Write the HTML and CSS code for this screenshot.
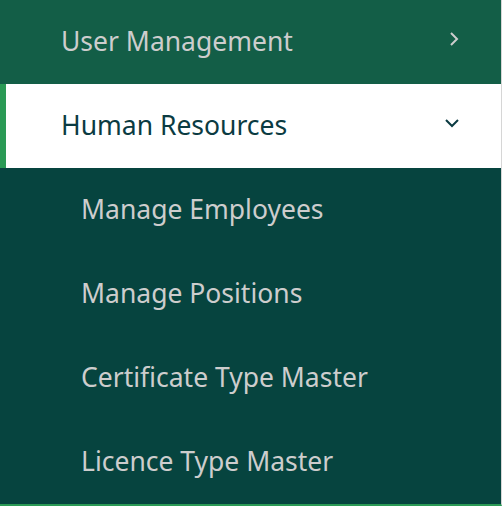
FILE: index.html
```html
<!DOCTYPE html>
<html lang="en">
<head>
    <meta charset="UTF-8">
    <meta name="viewport" content="width=device-width, initial-scale=1.0">
    <title>Sidebar</title>
    <link rel="stylesheet" href="styles.css">
</head>
<body>
    <nav class="sidebar">
        <a href="#" class="menu-item">
            <span class="menu-label">User Management</span>
            <svg class="arrow" width="10" height="16" viewBox="0 0 10 16">
                <path d="M2 2 L8 8 L2 14" fill="none" stroke="currentColor" stroke-width="2"/>
            </svg>
        </a>
        <a href="#" class="menu-item active">
            <span class="menu-label">Human Resources</span>
            <svg class="arrow" width="16" height="10" viewBox="0 0 16 10">
                <path d="M2 2 L8 8 L14 2" fill="none" stroke="currentColor" stroke-width="2"/>
            </svg>
        </a>
        <div class="submenu">
            <a href="#" class="sub-item">Manage Employees</a>
            <a href="#" class="sub-item">Manage Positions</a>
            <a href="#" class="sub-item">Certificate Type Master</a>
            <a href="#" class="sub-item">Licence Type Master</a>
        </div>
    </nav>
</body>
</html>
```

FILE: styles.css
```css
* {
    margin: 0;
    padding: 0;
    box-sizing: border-box;
    font-family: "Noto Sans", sans-serif;
}

body {
    background: #06443f;
}

.sidebar {
    width: 502px;
    height: 506px;
    display: flex;
    flex-direction: column;
    border-bottom: 2px solid #2a9a55;
    border-right: 1px solid #d6d6d6;
}

.menu-item {
    display: flex;
    align-items: center;
    justify-content: space-between;
    height: 84px;
    padding: 0 42px 2px 61px;
    background: #135e47;
    color: #cdcdcd;
    text-decoration: none;
    font-size: 26.5px;
}

.menu-item .arrow {
    margin-bottom: 4px;
}

.menu-item.active {
    background: #ffffff;
    color: #0b3b42;
    border-left: 6px solid #2a9a55;
    padding-left: 55px;
}

.menu-item.active .arrow {
    margin-right: -1px;
}

.submenu {
    display: flex;
    flex-direction: column;
    background: #06443f;
}

.sub-item {
    display: flex;
    align-items: center;
    height: 84px;
    padding: 0 0 2px 81px;
    color: #cdcdcd;
    text-decoration: none;
    font-size: 26.5px;
}
```
